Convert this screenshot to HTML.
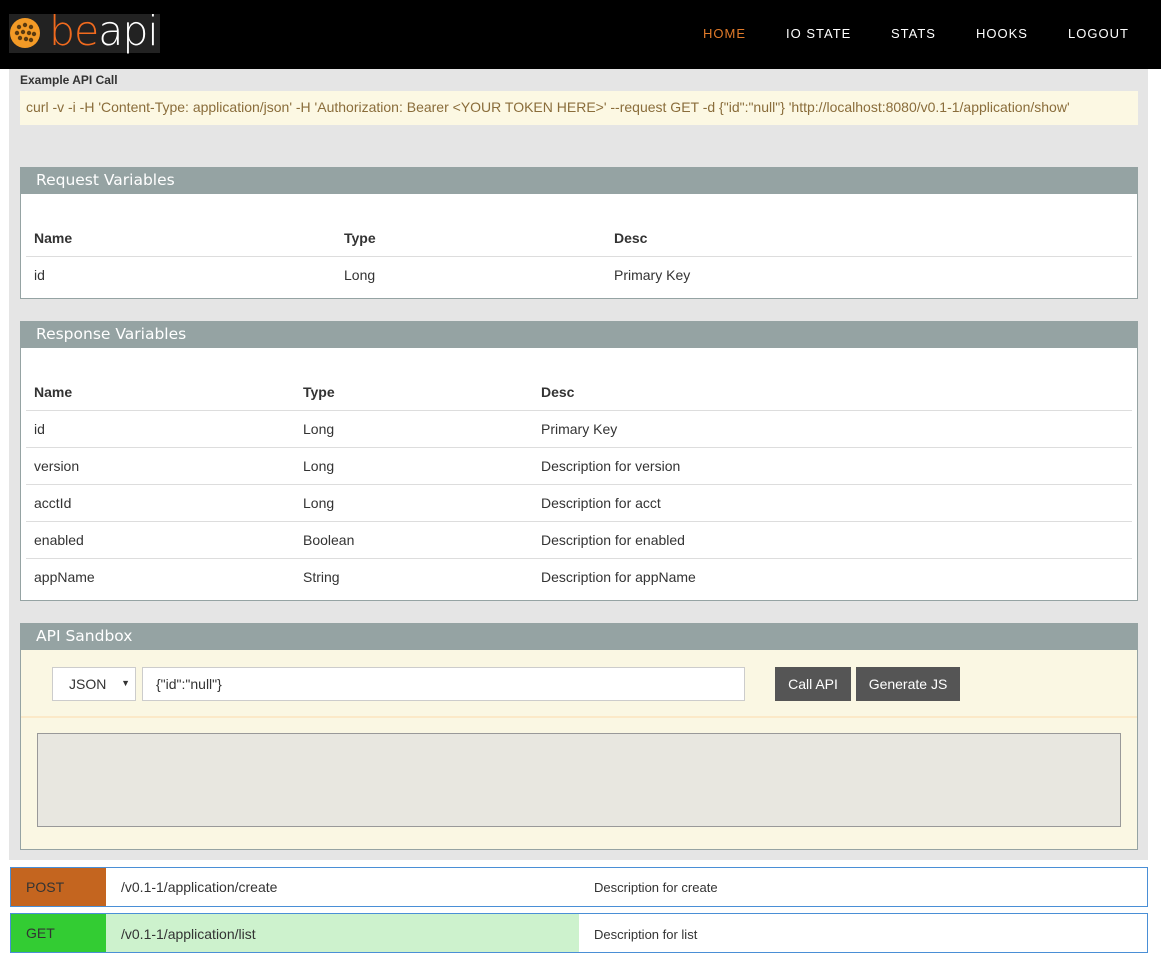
<!DOCTYPE html>
<html><head><meta charset="utf-8"><style>
*{box-sizing:border-box;margin:0;padding:0}
body{width:1161px;height:948px;overflow:hidden;background:#fff;font-family:"Liberation Sans",sans-serif;font-size:14px;color:#333;position:relative}
.a{position:absolute}
.hdr{left:0;top:0;width:1161px;height:69px;background:#000}
.nav{top:26px;font-size:13px;letter-spacing:1px;color:#fff}
.cont{left:9px;top:69px;width:1139px;height:791px;background:#e5e5e5}
.panel{left:20px;width:1118px;background:#fff;border:1px solid #95a3a3}
.ph{height:27px;background:#95a3a3;color:#fff;font-family:"DejaVu Sans",sans-serif;font-size:15.5px;padding:4px 16px 0;margin:-1px -1px 0}
.tb{position:absolute;left:5px;right:5px}
.row{position:absolute;left:0;right:0;height:37px;border-top:1px solid #ddd}
.row span,.th span{position:absolute;top:10px}
.th span{font-weight:bold}
.btn{top:667px;height:34px;background:#555;color:#fff;font-size:14px;text-align:center;line-height:34px}
</style></head><body>
<div class="a hdr"></div>
<div class="a" style="left:9px;top:14px;width:151px;height:39px;background:#222"></div>
<svg class="a" style="left:9px;top:17px" width="34" height="34" viewBox="0 0 34 34"><circle cx="16" cy="16" r="15" fill="#f39a26"/><g fill="#5a3a10"><circle cx="10" cy="10" r="2.2"/><circle cx="16" cy="8" r="2.2"/><circle cx="22" cy="10" r="2.2"/><circle cx="8" cy="16" r="2.2"/><circle cx="14" cy="15" r="2.2"/><circle cx="20" cy="16" r="2.2"/><circle cx="25" cy="17" r="2.2"/><circle cx="11" cy="21" r="2.2"/><circle cx="17" cy="22" r="2.2"/><circle cx="22" cy="23" r="2.2"/></g></svg>
<div class="a" style="left:49px;top:6px;font-family:'DejaVu Sans',sans-serif;font-weight:200;font-size:41px;line-height:50px;letter-spacing:-1px"><span style="color:#f06a1e">be</span><span style="color:#fff">api</span></div>
<div class="a nav" style="left:703px;color:#e07a2a">HOME</div>
<div class="a nav" style="left:786px">IO STATE</div>
<div class="a nav" style="left:891px">STATS</div>
<div class="a nav" style="left:976px">HOOKS</div>
<div class="a nav" style="left:1068px">LOGOUT</div>

<div class="a cont"></div>
<div class="a" style="left:20px;top:73px;font-size:12px;font-weight:bold">Example API Call</div>
<div class="a" style="left:20px;top:91px;width:1118px;height:34px;background:#fcf8e3;color:#8a6d3b;padding:8px 6px;white-space:nowrap">curl -v -i -H 'Content-Type: application/json' -H 'Authorization: Bearer &lt;YOUR TOKEN HERE&gt;' --request GET -d {"id":"null"} 'http://localhost:8080/v0.1-1/application/show'</div>

<div class="a panel" style="top:167px;height:132px">
<div class="ph">Request Variables</div>
<div class="tb" style="top:27px">
<div class="th" style="position:absolute;left:0;right:0;top:26px;height:36px"><span style="left:8px;top:9px">Name</span><span style="left:318px;top:9px">Type</span><span style="left:588px;top:9px">Desc</span></div>
<div class="row" style="top:61px"><span style="left:8px">id</span><span style="left:318px">Long</span><span style="left:588px">Primary Key</span></div>
</div></div>

<div class="a panel" style="top:321px;height:280px">
<div class="ph">Response Variables</div>
<div class="tb" style="top:27px">
<div class="th" style="position:absolute;left:0;right:0;top:26px;height:36px"><span style="left:8px;top:9px">Name</span><span style="left:277px;top:9px">Type</span><span style="left:515px;top:9px">Desc</span></div>
<div class="row" style="top:61px"><span style="left:8px">id</span><span style="left:277px">Long</span><span style="left:515px">Primary Key</span></div>
<div class="row" style="top:98px"><span style="left:8px">version</span><span style="left:277px">Long</span><span style="left:515px">Description for version</span></div>
<div class="row" style="top:135px"><span style="left:8px">acctId</span><span style="left:277px">Long</span><span style="left:515px">Description for acct</span></div>
<div class="row" style="top:172px"><span style="left:8px">enabled</span><span style="left:277px">Boolean</span><span style="left:515px">Description for enabled</span></div>
<div class="row" style="top:209px"><span style="left:8px">appName</span><span style="left:277px">String</span><span style="left:515px">Description for appName</span></div>
</div></div>

<div class="a panel" style="top:623px;height:227px;background:#faf7e3">
<div class="ph">API Sandbox</div>
<div class="a" style="left:0;right:0;top:92px;height:2px;background:#fbe9c8"></div>
</div>
<div class="a" style="left:52px;top:667px;width:84px;height:34px;background:#fff;border:1px solid #ccc;padding:8px 0 0 16px">JSON<span style="position:absolute;right:5px;top:10px;font-size:9px">▼</span></div>
<div class="a" style="left:142px;top:667px;width:603px;height:34px;background:#fff;border:1px solid #ccc;padding:8px 0 0 13px">{"id":"null"}</div>
<div class="a btn" style="left:775px;width:76px">Call API</div>
<div class="a btn" style="left:856px;width:104px">Generate JS</div>
<div class="a" style="left:37px;top:733px;width:1084px;height:94px;background:#e8e7e0;border:1px solid #999"></div>

<div class="a" style="left:10px;top:867px;width:1138px;height:40px;border:1px solid #4a8fd6;background:#fff"></div>
<div class="a" style="left:11px;top:868px;width:95px;height:38px;background:#c4651f;padding:11px 0 0 15px">POST</div>
<div class="a" style="left:121px;top:879px">/v0.1-1/application/create</div>
<div class="a" style="left:594px;top:880px;font-size:13px">Description for create</div>

<div class="a" style="left:10px;top:913px;width:1138px;height:40px;border:1px solid #4a8fd6;background:#fff"></div>
<div class="a" style="left:106px;top:914px;width:473px;height:38px;background:#cdf2cd"></div>
<div class="a" style="left:11px;top:914px;width:95px;height:38px;background:#3c3;padding:11px 0 0 15px">GET</div>
<div class="a" style="left:121px;top:926px">/v0.1-1/application/list</div>
<div class="a" style="left:594px;top:927px;font-size:13px">Description for list</div>
</body></html>
